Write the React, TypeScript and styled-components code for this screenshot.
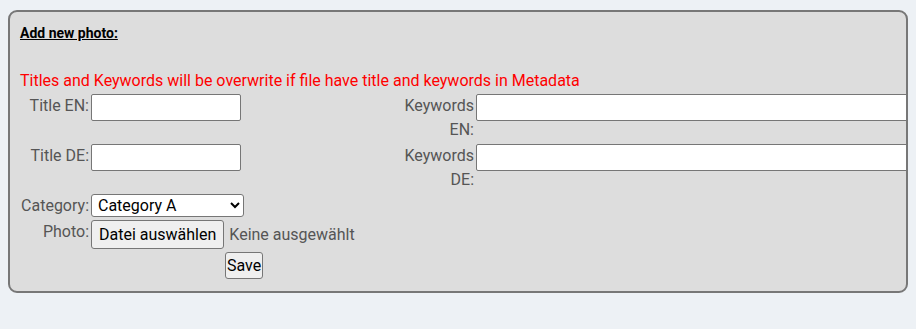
import React from 'react';
import styled, { createGlobalStyle } from 'styled-components';

const GlobalStyle = createGlobalStyle`
  body {
    margin: 8px;
    background: #edf1f5;
    font-family: Roboto, "Liberation Sans", sans-serif;
    font-size: 16px;
  }
`

const Panel = styled.div`
  margin-top: 2px;
  background: #dddddd;
  border: 2px solid #777777;
  border-radius: 9px;
  padding: 10px 10px 12px;
  overflow: hidden;
`

const Heading = styled.h5`
  margin: 3px 0 0;
  font-size: 14px;
  line-height: 16px;
  font-weight: bold;
  text-decoration: underline;
  color: #000;
`

const Notice = styled.p`
  margin: 28px 0 0;
  line-height: 24px;
  color: #ff0000;
  white-space: nowrap;
`

const FormGrid = styled.div`
  margin-top: 1px;
  display: grid;
  grid-template-columns: 69px 306px 75px 1fr;
  column-gap: 2px;
  row-gap: 2px;
  align-items: start;
`

const Label = styled.label`
  text-align: right;
  line-height: 24px;
  color: #555555;
`

const TextInput = styled.input<{ $wide?: boolean }>`
  box-sizing: border-box;
  width: ${p => (p.$wide ? '460px' : '150px')};
  height: 27px;
  margin: 0;
  padding: 1px 3px;
  border: 1px solid #767676;
  border-radius: 2px;
  background: #fff;
  font: 16px Roboto, sans-serif;
`

const Select = styled.select`
  box-sizing: border-box;
  width: 153px;
  height: 23px;
  margin: 0;
  padding: 0 0 0 2px;
  border: 1px solid #767676;
  border-radius: 3px;
  background: #fff;
  color: #000;
  font: 16px Roboto, sans-serif;
`

const FileField = styled.div`
  display: flex;
  align-items: center;
  gap: 5px;
  grid-column: 2 / 5;
  color: #555555;
  white-space: nowrap;
`

const Button = styled.button<{ $tight?: boolean }>`
  box-sizing: border-box;
  height: ${p => (p.$tight ? '27px' : '29px')};
  margin: 0;
  padding: ${p => (p.$tight ? '0 1px' : '0 7px')};
  border: 1px solid #767676;
  border-radius: 3px;
  background: #efefef;
  color: #000;
  font: 16px Roboto, sans-serif;
`

const SaveCell = styled.div`
  grid-column: 2;
  display: flex;
  justify-content: center;
  padding-top: 1px;
`

export default function App() {
  return (
    <>
      <GlobalStyle />
      <Panel>
        <Heading>Add new photo:</Heading>
        <Notice>Titles and Keywords will be overwrite if file have title and keywords in Metadata</Notice>
        <FormGrid>
          <Label>Title EN:</Label>
          <TextInput type="text" />
          <Label>Keywords EN:</Label>
          <TextInput type="text" $wide />

          <Label>Title DE:</Label>
          <TextInput type="text" />
          <Label>Keywords DE:</Label>
          <TextInput type="text" $wide />

          <Label>Category:</Label>
          <Select defaultValue="a" style={{ gridColumn: '2 / 5' }}>
            <option value="a">Category A</option>
            <option value="b">Category B</option>
          </Select>

          <Label>Photo:</Label>
          <FileField>
            <Button type="button">Datei auswählen</Button>
            <span>Keine ausgewählt</span>
          </FileField>

          <SaveCell>
            <Button type="button" $tight>Save</Button>
          </SaveCell>
        </FormGrid>
      </Panel>
    </>
  )
}
